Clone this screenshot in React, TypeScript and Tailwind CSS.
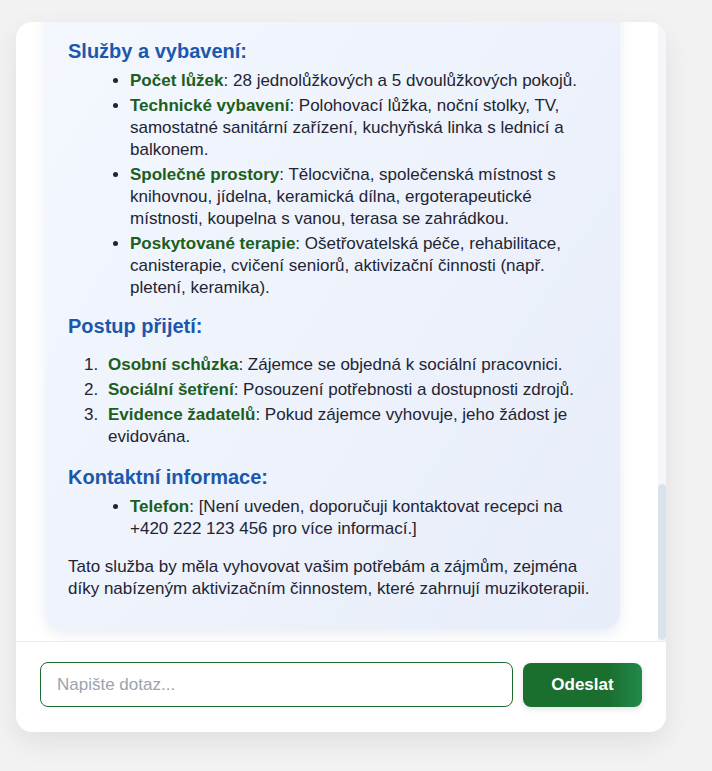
import React from "react";

const H = ({ children, className = "" }: { children: React.ReactNode; className?: string }) => (
  <h3 className={`text-[20px] leading-[24px] font-bold text-[#1b58ab] ${className}`}>{children}</h3>
);

const S = ({ children }: { children: React.ReactNode }) => (
  <strong className="font-bold text-[#1b5e20]">{children}</strong>
);

const O = ({ n, children, className = "" }: { n: number; children: React.ReactNode; className?: string }) => (
  <li className={`flex flex-row ${className}`}>
    <span className="w-[24px] shrink-0">{n}.</span>
    <span>{children}</span>
  </li>
);

export default function App() {
  return (
    <div className="min-h-[771px] bg-[#f2f2f2] pl-4 pt-[22px] [font-family:'Liberation_Sans',Arial,sans-serif]">
      <div className="w-[650px] h-[710px] bg-white rounded-2xl overflow-hidden shadow-[0_10px_28px_rgba(0,0,0,0.08)] flex flex-col">
        <div className="flex flex-row h-[619px]">
          <div className="flex-1 overflow-hidden flex flex-col justify-end pl-[30px] pr-[38px] pb-[12px]">
            <div className="shrink-0 rounded-2xl bg-gradient-to-br from-[#f6f9ff] to-[#e7edf9] shadow-[0_4px_14px_rgba(30,60,120,0.10)] pl-[22px] pr-[16px] pb-[29px] pt-[300px] text-[17px] leading-[22px] text-[#1e2533]">
              <H className="mt-0">Služby a vybavení:</H>
              <ul className="list-disc pl-[62px] mt-[7px]">
                <li className="mb-[3px]"><S>Počet lůžek</S>: 28 jednolůžkových a 5 dvoulůžkových pokojů.</li>
                <li className="mb-[3px]"><S>Technické vybavení</S>: Polohovací lůžka, noční stolky, TV, samostatné sanitární zařízení, kuchyňská linka s lednicí a balkonem.</li>
                <li className="mb-[3px]"><S>Společné prostory</S>: Tělocvična, společenská místnost s knihovnou, jídelna, keramická dílna, ergoterapeutické místnosti, koupelna s vanou, terasa se zahrádkou.</li>
                <li><S>Poskytované terapie</S>: Ošetřovatelská péče, rehabilitace, canisterapie, cvičení seniorů, aktivizační činnosti (např. pletení, keramika).</li>
              </ul>
              <H className="mt-[15px]">Postup přijetí:</H>
              <ol className="pl-[16px] mt-[16px]">
                <O n={1} className="mb-[3px]"><S>Osobní schůzka</S>: Zájemce se objedná k sociální pracovnici.</O>
                <O n={2} className="mb-[3px]"><S>Sociální šetření</S>: Posouzení potřebnosti a dostupnosti zdrojů.</O>
                <O n={3}><S>Evidence žadatelů</S>: Pokud zájemce vyhovuje, jeho žádost je evidována.</O>
              </ol>
              <H className="mt-[17px]">Kontaktní informace:</H>
              <ul className="list-disc pl-[62px] mt-[7px]">
                <li><S>Telefon</S>: [Není uveden, doporučuji kontaktovat recepci na +420 222 123 456 pro více informací.]</li>
              </ul>
              <p className="mt-[16px]">Tato služba by měla vyhovovat vašim potřebám a zájmům, zejména díky nabízeným aktivizačním činnostem, které zahrnují muzikoterapii.</p>
            </div>
          </div>
          <div className="w-[8px] bg-[#f4f6f9] flex flex-col">
            <div className="mt-[462px] h-[156px] rounded-full bg-[#dae3ec]" />
          </div>
        </div>
        <div className="border-t border-[#ececec] flex flex-row items-center gap-[10px] px-6 pt-5 pb-[25px]">
          <input
            autoFocus
            placeholder="Napište dotaz..."
            className="flex-1 h-[45px] rounded-lg border border-[#1b6e2e] px-4 text-[17px] text-[#1f2937] placeholder:text-[#9ca3af] caret-[#2f6fe0] outline-none bg-white"
          />
          <button className="w-[119px] h-[44px] rounded-lg bg-gradient-to-r from-[#1a6e2e] via-[#1a6e2e] via-70% to-[#21894a] text-white font-bold text-[17px] shadow-[0_2px_6px_rgba(0,0,0,0.12)]">
            Odeslat
          </button>
        </div>
      </div>
    </div>
  );
}
